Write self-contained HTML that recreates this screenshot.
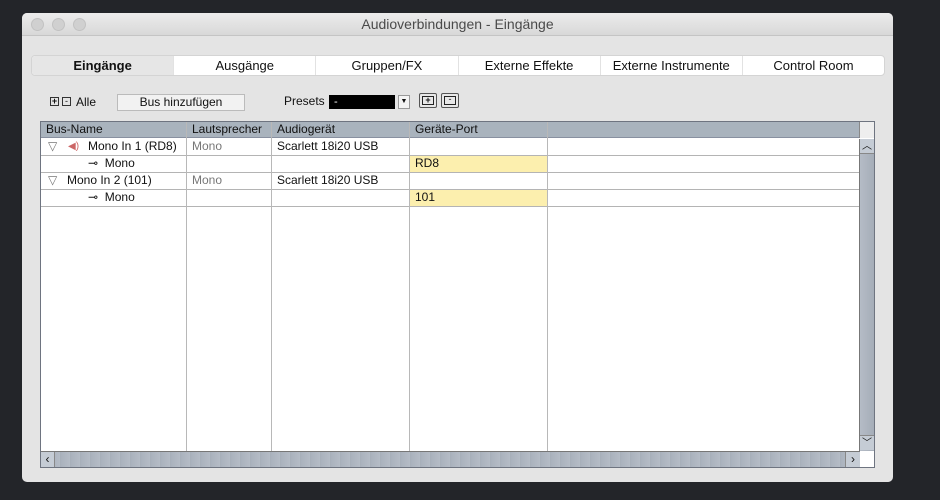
<!DOCTYPE html>
<html><head><meta charset="utf-8"><style>
*{margin:0;padding:0;box-sizing:border-box}
body{width:940px;height:500px;background:#232529;position:relative;overflow:hidden;font-family:"Liberation Sans",sans-serif;font-size:12px;color:#111}
.a{position:absolute}
#win{left:22px;top:13px;width:871px;height:469px;background:#e4e4e4;border-radius:5px;overflow:hidden}
#tb{left:0;top:0;width:871px;height:23px;background:linear-gradient(#ececec,#d8d8d8);border-bottom:1px solid #c4c4c4;text-align:center;font-size:14px;line-height:23px;color:#4a4a4a}
.dot{top:5px;width:13px;height:13px;border-radius:50%;background:#d0d0d0;border:1px solid #c2c2c2}
#tabs{left:9px;top:42px;width:854px;height:21px;background:#fff;border:1px solid #d4d4d4;border-radius:4px;display:flex;overflow:hidden}
#tabs div{flex:1;text-align:center;line-height:19px;font-size:13px;border-left:1px solid #e2e2e2}
#tabs div:first-child{background:#e6e6e6;font-weight:bold;border-left:none}
.cell{position:absolute;height:17px;line-height:17px;padding-left:5px;white-space:nowrap}
.hl{position:absolute;height:1px;background:#b4b4b4;left:0;width:818px}
.vl{position:absolute;width:1px;background:#b8b8b8;top:0}
</style></head><body>
<div id="win" class="a">
 <div id="tb" class="a">Audioverbindungen - Eingänge</div>
 <div class="a dot" style="left:9px"></div><div class="a dot" style="left:30px"></div><div class="a dot" style="left:51px"></div>
 <div id="tabs" class="a"><div>Eingänge</div><div>Ausgänge</div><div>Gruppen/FX</div><div>Externe Effekte</div><div>Externe Instrumente</div><div>Control Room</div></div>
 <div class="a" style="left:28px;top:84px;width:9px;height:9px;border:1px solid #333;font-size:9px;line-height:7px;text-align:center;font-weight:bold">+</div>
 <div class="a" style="left:40px;top:84px;width:9px;height:9px;border:1px solid #333;font-size:9px;line-height:6px;text-align:center">-</div>
 <div class="a" style="left:54px;top:82px;font-size:12px">Alle</div>
 <div class="a" style="left:95px;top:81px;width:128px;height:17px;background:#f2f2f2;border:1px solid #bbb;text-align:center;line-height:15px;font-size:12px">Bus hinzufügen</div>
 <div class="a" style="left:262px;top:81px;font-size:12px">Presets</div>
 <div class="a" style="left:307px;top:82px;width:66px;height:14px;background:#000;color:#fff;font-size:11px;line-height:14px;padding-left:5px">-</div>
 <div class="a" style="left:376px;top:82px;width:12px;height:14px;background:#f4f4f4;border:1px solid #999;font-size:7px;line-height:12px;text-align:center">▼</div>
 <div class="a" style="left:397px;top:80px;width:18px;height:15px;background:#e8e8e8;border:1px solid #555;border-radius:2px"><div class="a" style="left:2px;top:2px;width:12px;height:9px;border:1px solid #222;font-size:9px;line-height:6px;font-weight:bold;text-align:center">+</div></div>
 <div class="a" style="left:419px;top:80px;width:18px;height:15px;background:#e8e8e8;border:1px solid #555;border-radius:2px"><div class="a" style="left:2px;top:2px;width:12px;height:9px;border:1px solid #222;font-size:9px;line-height:5px;text-align:center">-</div></div>
 <div class="a" style="left:18px;top:108px;width:835px;height:347px;border:1px solid #6e7480;background:#fff">
  <div class="a" style="left:0;top:0;width:818px;height:16px;background:#a9b3bd;border-bottom:1px solid #8890a0"></div>
  <div class="a" style="left:818px;top:0;width:15px;height:16px;background:#eee;border-left:1px solid #888"></div>
  <div class="cell" style="left:0;top:-1px">Bus-Name</div>
  <div class="cell" style="left:146px;top:-1px">Lautsprecher</div>
  <div class="cell" style="left:231px;top:-1px">Audiogerät</div>
  <div class="cell" style="left:369px;top:-1px">Geräte-Port</div>
  <div class="a" style="left:369px;top:34px;width:138px;height:17px;background:#fcefae"></div>
  <div class="a" style="left:369px;top:68px;width:138px;height:17px;background:#fcefae"></div>
  <div class="hl" style="top:33px"></div><div class="hl" style="top:50px"></div><div class="hl" style="top:67px"></div><div class="hl" style="top:84px"></div>
  <div class="vl" style="left:145px;height:329px"></div>
  <div class="vl" style="left:230px;height:329px"></div>
  <div class="vl" style="left:368px;height:329px"></div>
  <div class="vl" style="left:506px;height:329px"></div>
  <div class="cell" style="left:2px;top:16px;color:#777">▽</div>
  <div class="cell" style="left:22px;top:16px;color:#c66;font-size:10px">◀)</div>
  <div class="cell" style="left:42px;top:16px">Mono In 1 (RD8)</div>
  <div class="cell" style="left:146px;top:16px;color:#777">Mono</div>
  <div class="cell" style="left:231px;top:16px">Scarlett 18i20 USB</div>
  <div class="cell" style="left:42px;top:33px">⊸&nbsp; Mono</div>
  <div class="cell" style="left:369px;top:33px">RD8</div>
  <div class="cell" style="left:2px;top:50px;color:#777">▽</div>
  <div class="cell" style="left:21px;top:50px">Mono In 2 (101)</div>
  <div class="cell" style="left:146px;top:50px;color:#777">Mono</div>
  <div class="cell" style="left:231px;top:50px">Scarlett 18i20 USB</div>
  <div class="cell" style="left:42px;top:67px">⊸&nbsp; Mono</div>
  <div class="cell" style="left:369px;top:67px">101</div>
  <div class="a" style="left:818px;top:17px;width:15px;height:312px;background:linear-gradient(90deg,#b5bcc6,#a5adb8);border-left:1px solid #777">
   <div class="a" style="left:0;top:0;width:14px;height:15px;background:#c5ccd5;border-bottom:1px solid #888;font-size:10px;text-align:center;line-height:15px">︿</div>
   <div class="a" style="left:0;top:296px;width:14px;height:15px;background:#c5ccd5;border-top:1px solid #888;font-size:10px;text-align:center;line-height:15px">﹀</div>
  </div>
  <div class="a" style="left:0;top:329px;width:819px;height:16px;background:repeating-linear-gradient(90deg,#aab2bd 0,#b5bcc6 9px,#9aa3ae 10px);border-top:1px solid #777">
   <div class="a" style="left:0;top:0;width:14px;height:15px;background:#c5ccd5;border-right:1px solid #888;text-align:center;line-height:15px">‹</div>
   <div class="a" style="left:804px;top:0;width:15px;height:15px;background:#c5ccd5;border-left:1px solid #888;text-align:center;line-height:15px">›</div>
  </div>
 </div>
</div>
</body></html>
